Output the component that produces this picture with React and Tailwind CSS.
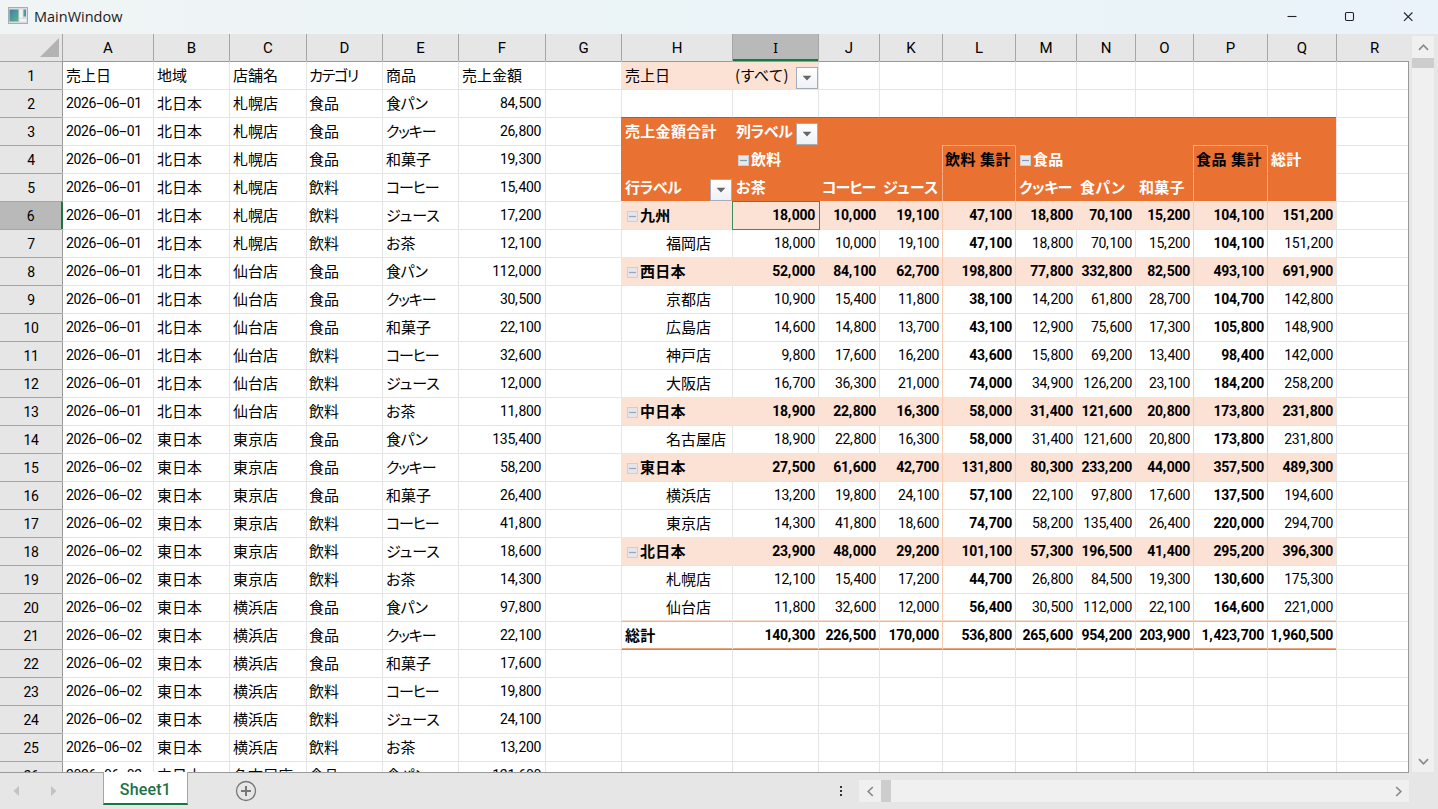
const COLS = [
  ['A', 91], ['B', 76], ['C', 77], ['D', 76], ['E', 76], ['F', 87], ['G', 76], ['H', 111], ['I', 86],
  ['J', 61], ['K', 63], ['L', 73], ['M', 61], ['N', 59], ['O', 58], ['P', 74], ['Q', 69], ['R', 72],
];

const STORES = [
  ['2026-06-01', '北日本', '札幌店', '84,500 26,800 19,300 15,400 17,200 12,100'],
  ['2026-06-01', '北日本', '仙台店', '112,000 30,500 22,100 32,600 12,000 11,800'],
  ['2026-06-02', '東日本', '東京店', '135,400 58,200 26,400 41,800 18,600 14,300'],
  ['2026-06-02', '東日本', '横浜店', '97,800 22,100 17,600 19,800 24,100 13,200'],
  ['2026-06-02', '中日本', '名古屋店', '121,600'],
];
const ITEMS = [
  ['食品', '食パン'], ['食品', 'クッキー'], ['食品', '和菓子'],
  ['飲料', 'コーヒー'], ['飲料', 'ジュース'], ['飲料', 'お茶'],
];
const SOURCE = [
  ['売上日', '地域', '店舗名', 'カテゴリ', '商品', '売上金額'],
  ...STORES.flatMap(([date, area, store, sales]) =>
    sales.split(' ').map((n, i) => [date, area, store, ITEMS[i][0], ITEMS[i][1], n])),
];

const PIVOT = {
  6: ['九州', '18,000 10,000 19,100 47,100 18,800 70,100 15,200 104,100 151,200'],
  7: ['福岡店', '18,000 10,000 19,100 47,100 18,800 70,100 15,200 104,100 151,200'],
  8: ['西日本', '52,000 84,100 62,700 198,800 77,800 332,800 82,500 493,100 691,900'],
  9: ['京都店', '10,900 15,400 11,800 38,100 14,200 61,800 28,700 104,700 142,800'],
  10: ['広島店', '14,600 14,800 13,700 43,100 12,900 75,600 17,300 105,800 148,900'],
  11: ['神戸店', '9,800 17,600 16,200 43,600 15,800 69,200 13,400 98,400 142,000'],
  12: ['大阪店', '16,700 36,300 21,000 74,000 34,900 126,200 23,100 184,200 258,200'],
  13: ['中日本', '18,900 22,800 16,300 58,000 31,400 121,600 20,800 173,800 231,800'],
  14: ['名古屋店', '18,900 22,800 16,300 58,000 31,400 121,600 20,800 173,800 231,800'],
  15: ['東日本', '27,500 61,600 42,700 131,800 80,300 233,200 44,000 357,500 489,300'],
  16: ['横浜店', '13,200 19,800 24,100 57,100 22,100 97,800 17,600 137,500 194,600'],
  17: ['東京店', '14,300 41,800 18,600 74,700 58,200 135,400 26,400 220,000 294,700'],
  18: ['北日本', '23,900 48,000 29,200 101,100 57,300 196,500 41,400 295,200 396,300'],
  19: ['札幌店', '12,100 15,400 17,200 44,700 26,800 84,500 19,300 130,600 175,300'],
  20: ['仙台店', '11,800 32,600 12,000 56,400 30,500 112,000 22,100 164,600 221,000'],
  21: ['総計', '140,300 226,500 170,000 536,800 265,600 954,200 203,900 1,423,700 1,960,500'],
};
const GROUPS = [6, 8, 13, 15, 18];
const HEAD = {
  '3H': '売上金額合計', '3I': '列ラベル', '4I': '飲料', '4L': '飲料 集計', '4M': '食品', '4P': '食品 集計', '4Q': '総計',
  '5H': '行ラベル', '5I': 'お茶', '5J': 'コーヒー', '5K': 'ジュース', '5M': 'クッキー', '5N': '食パン', '5O': '和菓子',
};
const PIVOT_COLS = 'HIJKLMNOPQ';
const KANA = /[ァ-ヶぁ-ん]/;
const TRACKING = {
  'カテゴリ': 'tracking-[-1.2px]',
  'クッキー': 'tracking-[-1.2px]',
  'コーヒー': 'tracking-[-1.2px]',
  '食パン': 'tracking-[-0.6px]',
};
const BOLD_TRACKING = {
  'コーヒー': 'tracking-[-0.9px]',
  'クッキー': 'tracking-[-0.4px]',
  '列ラベル': 'tracking-[-0.4px]',
  '行ラベル': 'tracking-[-0.4px]',
  '飲料 集計': 'tracking-[0.5px]',
  '食品 集計': 'tracking-[0.5px]',
};

function Num({ children, bold }) {
  return (
    <span className={`font-['Roboto',sans-serif] text-[14px] ${bold ? 'font-bold tracking-[-0.3px]' : 'tracking-[-0.34px]'}`}>
      {children.split(/([,-])/).map((p, i) => {
        if (p === ',') return <span key={i} className="tracking-[0.7px]">,</span>;
        if (p === '-') return <span key={i} className="inline-block w-[7.8px] text-center"><span className="inline-block scale-x-[1.9] tracking-normal">-</span></span>;
        return p;
      })}
    </span>
  );
}

function Label({ children, bold, className = '' }) {
  const tracking = bold ? BOLD_TRACKING[children] ?? 'tracking-[0.3px]' : TRACKING[children] ?? '';
  const kana = KANA.test(children) && !children.startsWith('(') ? "[font-feature-settings:'palt']" : '';
  return <span className={`${kana} ${tracking} ${bold ? 'font-bold' : ''} ${className}`}>{children}</span>;
}

function DropButton() {
  return (
    <span className="absolute top-[5px] right-0 z-10 flex h-[22px] w-[22px] items-center justify-center border border-[#a3adb8] bg-gradient-to-b from-white to-[#eef1f6]">
      <svg width="10" height="6" viewBox="0 0 10 6"><path d="M0.6 0.8h8.8L5 5.6z" fill="#666" /></svg>
    </span>
  );
}

function Collapse({ dim }) {
  return (
    <svg className="mt-[3px] mr-[2px] shrink-0" width="11" height="11" viewBox="0 0 11 11">
      <rect x="0.5" y="0.5" width="10" height="10" fill={dim ? '#e6e6ea' : '#e4e9ee'} stroke={dim ? '#cfcfd3' : '#c9ccd0'} />
      <path d="M2 5.5h7" stroke={dim ? '#9aa5b5' : '#8b95a3'} strokeWidth="1.2" />
    </svg>
  );
}

function Cell({ row, col, width }) {
  const inCols = PIVOT_COLS.includes(col);
  const inPivot = inCols && row >= 3 && row <= 21;
  const header = inPivot && row <= 5;
  const group = inPivot && GROUPS.includes(row);
  const filter = row === 1 && (col === 'H' || col === 'I');
  const fill = header ? 'bg-[#e97132]' : group || filter ? 'bg-[#fbe2d5]' : 'bg-white';

  let top = 'border-t-[#e5e5e5]';
  if (row === 1) top = 'border-t-[#999]';
  else if (inCols && row === 3) top = 'border-t-[#c4571f]';
  else if (header) top = row === 4 && (col === 'L' || col === 'P') ? 'border-t-[#f4ae86]' : 'border-t-[#e97132]';
  else if (group) top = 'border-t-[#fbe2d5]';
  else if (inPivot && row === 21) top = 'border-t-[#f0b48f]';
  else if (inCols && row === 22) top = 'border-t-[#e07d44]';

  let left = 'border-l-[#e5e5e5]';
  if (col === 'A') left = row === 6 ? 'border-l-[#217346]' : 'border-l-[#999]';
  else if (inPivot && 'LMPQ'.includes(col) && row >= 4) left = header ? 'border-l-[#f4ae86]' : 'border-l-[#f8cbb0]';
  else if (header) left = 'border-l-[#e97132]';
  else if (group || filter) left = 'border-l-[#fbe2d5]';

  let edge = '';
  if (inPivot && row === 20) edge = 'shadow-[inset_0_-1px_0_#f9dccb]';
  if (inPivot && row === 21) edge = 'shadow-[inset_0_-1px_0_#eba67e]';

  const ci = COLS.findIndex((c) => c[0] === col);
  const source = ci < 6 ? SOURCE[row - 1]?.[ci] : undefined;
  const line = PIVOT[row];
  let body = null;
  let pad = 'pl-[3px]';
  if (source) {
    if (row > 1 && col === 'F') { body = <Num>{source}</Num>; pad = 'justify-end pr-[4px]'; }
    else if (row > 1 && col === 'A') body = <Num>{source}</Num>;
    else body = <Label>{source}</Label>;
    if (col === 'D') pad = 'pl-[2px]';
  } else if (filter) {
    body = <Label>{col === 'H' ? '売上日' : '(すべて)'}</Label>;
    if (col === 'I') pad = 'pl-[2px]';
  } else if (header) {
    const text = HEAD[row + col];
    const expandable = row === 4 && (col === 'I' || col === 'M');
    if (expandable) pad = col === 'I' ? 'pl-[5px]' : 'pl-[4px]';
    body = text && (
      <>
        {expandable && <Collapse />}
        <Label bold className={text.endsWith(' 集計') ? 'text-black' : 'text-white'}>{text}</Label>
      </>
    );
    if (text?.endsWith(' 集計')) pad = 'pl-[2px]';
  } else if (inPivot && line) {
    if (col === 'H') {
      pad = group ? 'pl-[5px]' : row === 21 ? 'pl-[3px]' : 'pl-[44px]';
      body = (
        <>
          {group && <Collapse dim />}
          <Label bold={group || row === 21}>{line[0]}</Label>
        </>
      );
    } else {
      pad = 'justify-end pr-[3px]';
      body = <Num bold={group || row === 21 || col === 'L' || col === 'P'}>{line[1].split(' ')[PIVOT_COLS.indexOf(col) - 1]}</Num>;
    }
  }

  const button = (row === 1 && col === 'I') || (row === 3 && col === 'I') || (row === 5 && col === 'H');
  return (
    <div className={`relative flex h-7 shrink-0 items-center border-t border-l pb-[2px] whitespace-nowrap ${fill} ${top} ${left} ${edge} ${pad}`} style={{ width }}>
      {body}
      {button && <DropButton />}
      {row === 6 && col === 'I' && <span className="absolute -top-px -left-px z-10 h-[29px] w-[88px] border border-[#3d8a60]" />}
    </div>
  );
}

function Chevron({ d }) {
  return (
    <svg width="11" height="11" viewBox="0 0 11 11" fill="none" stroke="#8a8a8a" strokeWidth="1.7"><path d={d} /></svg>
  );
}

export default function App() {
  return (
    <div className="flex h-[809px] w-[1438px] flex-col overflow-hidden bg-[#e6e6e6] font-['Noto_Sans_CJK_JP',sans-serif] text-[15px] leading-none text-black">
      <header className="flex h-[34px] shrink-0 items-center bg-gradient-to-r from-[#f0f4f5] via-[#ebf4f8] to-[#eaf3f9] pl-2">
        <svg className="-mt-[3px]" width="20" height="17" viewBox="0 0 20 17">
          <defs>
            <linearGradient id="win" x1="0" y1="0" x2="1" y2="1"><stop offset="0" stopColor="#3f7fae" /><stop offset="1" stopColor="#5cb585" /></linearGradient>
          </defs>
          <rect x="0.5" y="0.5" width="19" height="16" fill="#d9dcde" stroke="#a9adb1" />
          <rect x="1.5" y="2.5" width="9" height="12" fill="url(#win)" />
          <rect x="11.5" y="2.5" width="3" height="8.5" fill="#f3f3f3" />
          <rect x="15.5" y="2.5" width="2.5" height="7" fill="#4d9aa8" />
          <rect x="11.5" y="12" width="6.5" height="2.5" fill="#f3f3f3" />
        </svg>
        <span className="ml-[6px] font-['Open_Sans',sans-serif] text-[14.5px] text-[#1b1b1b]">MainWindow</span>
        <div className="ml-auto flex items-center pr-[23px] pb-[3px]">
          <svg width="128" height="12" viewBox="0 0 128 12" fill="none" stroke="#222" strokeWidth="1.1">
            <path d="M0.5 6.5h9" />
            <rect x="58.5" y="2.5" width="8" height="8" rx="1.2" />
            <path d="M117 2.5l8.4 8.4M125.4 2.5l-8.4 8.4" />
          </svg>
        </div>
      </header>

      <div className="flex h-[739px] shrink-0">
        <div className="flex w-[1409px] shrink-0 flex-col overflow-hidden border-b border-[#999]">
          <div className="flex h-[27px] shrink-0">
            <div className="flex w-[62px] shrink-0 items-end justify-end pr-[3px] pb-1">
              <svg width="19" height="19" viewBox="0 0 19 19"><path d="M19 0v19H0z" fill="#b3b3b3" /></svg>
            </div>
            {COLS.map(([name, w]) => (
              <div
                key={name}
                className={`flex h-full shrink-0 items-center justify-center border-l border-[#a6a6a6] pt-px ${name === 'I' ? 'bg-[#b9b9b9] shadow-[inset_0_-2px_0_#107c41]' : ''} ${name === 'R' ? 'pl-1' : ''}`}
                style={{ width: w }}
              >
                <span className={name === 'I' ? "font-['Noto_Sans',sans-serif] text-[14px]" : "font-['Roboto',sans-serif] text-[15px]"}>{name}</span>
              </div>
            ))}
          </div>
          <div className="flex flex-col">
            {Array.from({ length: 26 }, (_, i) => i + 1).map((row) => (
              <div key={row} className="flex h-7 shrink-0">
                <div className={`flex h-7 w-[62px] shrink-0 items-center justify-center border-t border-[#a6a6a6] ${row === 6 ? 'border-r border-r-[#107c41] bg-[#b9b9b9]' : ''}`}>
                  <Num>{String(row)}</Num>
                </div>
                {COLS.map(([name, w]) => <Cell key={name} row={row} col={name} width={w} />)}
                <div className="w-px bg-[#999]" />
              </div>
            ))}
          </div>
        </div>
        <div className="mt-[2px] ml-[3px] flex h-[736px] w-[22px] flex-col items-center bg-[#f0f0f0]">
          <div className="flex h-[22px] items-center"><Chevron d="M1 7.8l4.5-4.6L10 7.8" /></div>
          <div className="h-[10px] w-full bg-[#cdcdcd]" />
          <div className="mt-auto flex h-[22px] items-center"><Chevron d="M1 3.2l4.5 4.6L10 3.2" /></div>
        </div>
      </div>

      <footer className="flex h-9 shrink-0">
        <div className="flex w-[103px] items-center pl-[13px]">
          <svg width="44" height="12" viewBox="0 0 44 12" fill="#c3c3c3"><path d="M6 1v10L0.5 6zM38 1v10l5.5-5z" /></svg>
        </div>
        <div className="-mt-px flex h-[33px] w-[85px] items-center justify-center border-x border-b-2 border-x-[#a6a6a6] border-b-[#107c41] bg-white pt-[5px]">
          <span className="font-['Roboto',sans-serif] text-[16px] font-medium tracking-[0.2px] text-[#217346]">Sheet1</span>
        </div>
        <div className="flex items-center pl-[47px]">
          <svg width="22" height="22" viewBox="0 0 22 22" fill="none" stroke="#777"><circle cx="11" cy="11" r="9.5" strokeWidth="1.3" /><path d="M11 6v10M6 11h10" strokeWidth="2" /></svg>
        </div>
        <div className="ml-auto flex items-center pr-[29px]">
          <svg className="mr-4" width="4" height="12" viewBox="0 0 4 12" fill="#333"><path d="M1 1h2v2H1zM1 5h2v2H1zM1 9h2v2H1z" /></svg>
          <div className="flex h-[22px] w-[550px] items-center bg-[#f0f0f0]">
            <div className="flex w-[22px] justify-center"><Chevron d="M7.8 1L3.2 5.5 7.8 10" /></div>
            <div className="h-full w-[10px] bg-[#cdcdcd]" />
            <div className="ml-auto flex w-[22px] justify-center"><Chevron d="M3.2 1l4.6 4.5L3.2 10" /></div>
          </div>
        </div>
      </footer>
    </div>
  );
}
